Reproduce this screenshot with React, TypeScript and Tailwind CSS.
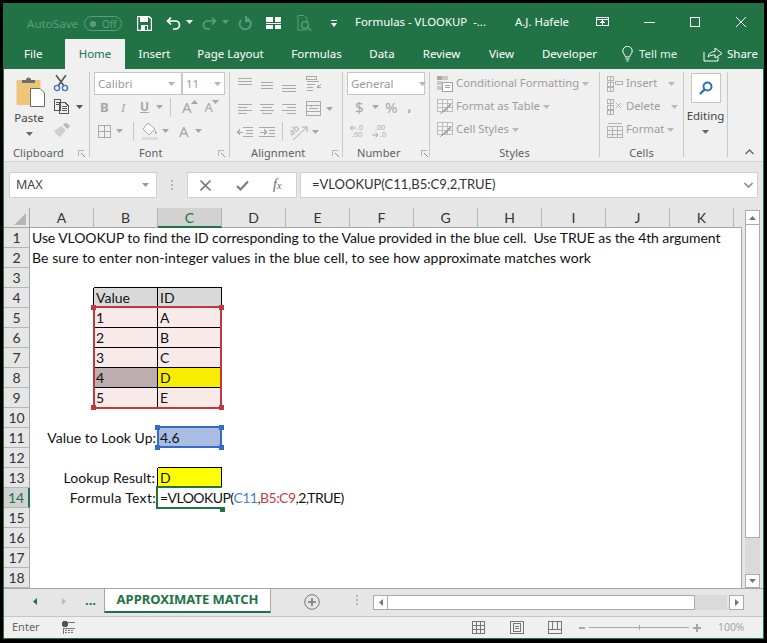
import React from "react";

const G = "#a9a9a9";

function Caret({ c = "#a6a6a6", className = "" }: { c?: string; className?: string }) {
  return (
    <svg width="7" height="4" viewBox="0 0 7 4" className={`shrink-0 ${className}`}>
      <path d="M0 0H7L3.5 4Z" fill={c} />
    </svg>
  );
}

function Lines({ w = 15, h = 14, d, c = G }: { w?: number; h?: number; d: string; c?: string }) {
  return (
    <svg width={w} height={h} viewBox={`0 0 ${w} ${h}`} className="shrink-0" shapeRendering="crispEdges">
      <path d={d} stroke={c} fill="none" strokeWidth="1" />
    </svg>
  );
}

function TitleBar() {
  const dim = "#5f9c7c";
  return (
    <div className="flex items-center h-[35px] text-white shrink-0 pt-[1px]">
      <span className="ml-[23px] w-[57px] mt-[3px] text-[11.6px] text-[#5f9c7c]">AutoSave</span>
      <span className="w-[38px] h-[15px] mt-[3px] rounded-full border border-[#5f9c7c] flex items-center pl-[5px] gap-[6px]">
        <span className="w-[6px] h-[6px] rounded-full bg-[#5f9c7c]" />
        <span className="text-[10px] leading-none text-[#5f9c7c]">Off</span>
      </span>
      <svg width="15" height="15" viewBox="0 0 15 15" className="ml-[15px] shrink-0 mt-[2px]">
        <path d="M0.5 0.5H12L14.5 3V14.5H0.5Z" fill="none" stroke="#fff" strokeWidth="1.4" />
        <rect x="3" y="1" width="8" height="5" fill="#fff" />
        <rect x="4" y="9" width="7" height="5" fill="#fff" />
        <rect x="8" y="10" width="2" height="4" fill="#217346" />
      </svg>
      <svg width="15" height="15" viewBox="0 0 15 15" className="ml-[14px] shrink-0 mt-[2px]">
        <path d="M5 1.5L1.5 5L5 8.5M2 5H9.5A3.6 3.6 0 0 1 9.5 13H7" fill="none" stroke="#fff" strokeWidth="1.7" />
      </svg>
      <Caret c="#fff" className="ml-[5px]" />
      <svg width="15" height="15" viewBox="0 0 15 15" className="ml-[9px] shrink-0 mt-[2px]">
        <path d="M10 1.5L13.5 5L10 8.5M13 5H5.5A3.6 3.6 0 0 0 5.5 13H8" fill="none" stroke={dim} strokeWidth="1.7" />
      </svg>
      <Caret c={dim} className="ml-[5px]" />
      <svg width="14" height="15" viewBox="0 0 14 15" className="ml-[9px] shrink-0 mt-[2px]">
        <path d="M8 2.2A5.6 5.6 0 1 1 3 4M8 0V5H12" fill="none" stroke={dim} strokeWidth="1.8" />
      </svg>
      <svg width="15" height="12" viewBox="0 0 15 12" className="ml-[14px] shrink-0 mt-[1px]" shapeRendering="crispEdges">
        <path d="M0 0H6.5V4.5H0ZM8.5 0H15V4.5H8.5ZM0 5.5H15V6.5H0ZM0 7.5H6.5V12H0ZM8.5 7.5H15V12H8.5Z" fill="#fff" />
      </svg>
      <svg width="15" height="16" viewBox="0 0 15 16" className="ml-[16px] shrink-0 mt-[2px]">
        <path d="M1 0.5H7L10 3.5V7M1 0.5V15H10" fill="none" stroke={dim} />
        <circle cx="8" cy="10" r="3.4" fill="none" stroke={dim} strokeWidth="1.4" />
        <path d="M10.5 12.5L14 15.5" stroke={dim} strokeWidth="1.6" />
      </svg>
      <svg width="6" height="7" viewBox="0 0 6 7" className="ml-[19px] shrink-0 mt-[2px]">
        <path d="M0 0H6V1H0ZM0 3H6L3 7Z" fill="#fff" />
      </svg>
      <span className="ml-[18px] w-[151px] text-[11.4px] whitespace-pre">Formulas - VLOOKUP  -...</span>
      <span className="ml-[9px] w-[70px] text-[11.4px]">A.J. Hafele</span>
      <svg width="13" height="10" viewBox="0 0 13 10" className="ml-[11px] shrink-0" shapeRendering="crispEdges">
        <path d="M0.5 0.5H12.5V8.5H0.5ZM0.5 2.5H12.5M6.5 8V4M4.5 6L6.5 4L8.5 6" fill="none" stroke="#fff" />
      </svg>
      <span className="ml-[35px] w-[11px] h-px bg-white" />
      <span className="ml-[35px] w-[10px] h-[10px] border border-white" />
      <svg width="10" height="10" viewBox="0 0 10 10" className="ml-[36px] shrink-0">
        <path d="M0 0L10 10M10 0L0 10" stroke="#fff" />
      </svg>
    </div>
  );
}

function TabRow() {
  const tabs: [string, string][] = [
    ["Insert", "w-[59px]"],
    ["Page Layout", "w-[93px]"],
    ["Formulas", "w-[79px]"],
    ["Data", "w-[52px]"],
    ["Review", "w-[67px]"],
    ["View", "w-[53px]"],
    ["Developer", "w-[83px]"],
  ];
  return (
    <div className="flex items-stretch h-[30px] text-[11.5px] text-white shrink-0">
      <div className="w-[61px] pl-[20px] flex items-center">File</div>
      <div className="w-[60px] bg-[#f0f0f0] text-[#217346] flex items-center justify-center">Home</div>
      {tabs.map(([t, w]) => (
        <div key={t} className={`${w} flex items-center justify-center`}>
          {t}
        </div>
      ))}
      <div className="ml-[11px] flex items-center">
        <svg width="11" height="16" viewBox="0 0 11 16" className="shrink-0">
          <path d="M3.5 11C3 8.5 0.8 7.5 0.8 5A4.7 4.7 0 0 1 10.2 5C10.2 7.5 8 8.5 7.5 11ZM3.5 13H7.5M4.5 15H6.5" fill="none" stroke="#fff" />
        </svg>
        <span className="ml-[6px] w-[45px] text-[#e4efe9]">Tell me</span>
      </div>
      <div className="ml-[19px] flex items-center">
        <svg width="20" height="15" viewBox="0 0 20 15" className="shrink-0">
          <path d="M1 5V14H15V10M5 10C5.5 6.5 8.5 4.5 12 4.5V1L19 6.5L12 11V8C9 8 6.5 8.5 5 10Z" fill="none" stroke="#fff" />
        </svg>
        <span className="ml-[4px]">Share</span>
      </div>
    </div>
  );
}

function Launcher() {
  return (
    <svg width="7" height="7" viewBox="0 0 7 7" className="shrink-0" shapeRendering="crispEdges">
      <path d="M0.5 6V0.5H6" fill="none" stroke="#b5b5b5" />
      <path d="M3 3L7 7M7 4V7H4" fill="none" stroke="#8f8f8f" />
    </svg>
  );
}

function Group({
  w,
  label,
  launcher,
  labelClass = "justify-center",
  children,
}: {
  w: string;
  label: string;
  launcher?: string;
  labelClass?: string;
  children: React.ReactNode;
}) {
  return (
    <div className={`${w} h-[85px] shrink-0 border-r border-[#c9c9c9] flex flex-col`}>
      <div className="h-[73px] shrink-0 flex flex-col">{children}</div>
      <div className={`h-[16px] shrink-0 flex items-center text-[11px] text-[#5e5e5e] tracking-[0.1px] ${labelClass}`}>
        <span>{label}</span>
        {launcher && <span className={launcher}><Launcher /></span>}
      </div>
    </div>
  );
}

function Combo({ w, t, text = "#9a9a9a", arrow }: { w: string; t: string; text?: string; arrow: string }) {
  return (
    <div className={`${w} h-[23px] bg-white border border-[#c6c6c6] flex items-center pl-[3px] text-[11.5px] shrink-0`} style={{ color: text }}>
      <span>{t}</span>
      <Caret c="#b5b5b5" className={arrow} />
    </div>
  );
}

function Clipboard() {
  return (
    <Group w="w-[86px]" label="Clipboard" labelClass="pl-[9px]" launcher="ml-[14px]">
      <div className="flex h-full">
        <div className="w-[46px] flex flex-col items-center pl-[7px] pt-[5px]">
          <svg width="30" height="30" viewBox="0 0 30 30" className="shrink-0">
            <rect x="0.5" y="3" width="24" height="25" rx="1" fill="#eec579" />
            <path d="M6 6V3H10A2.5 2.5 0 0 1 15 3H19V6Z" fill="#6e6e6e" />
            <path d="M14.5 11.5H24L28.5 16V29.5H14.5Z" fill="#fff" stroke="#6b6b6b" />
          </svg>
          <span className="text-[11.5px] text-[#444] leading-[16px] mt-[3px] -ml-[3px]">Paste</span>
          <Caret c="#666" className="mt-[6px] -ml-[3px]" />
        </div>
        <div className="flex flex-col pl-[4px] pt-[2px]">
          <svg width="16" height="17" viewBox="0 0 16 17" className="shrink-0 ml-[-1px] mt-[1px]">
            <path d="M3 0L11 11M13 0L5 11" stroke="#555" strokeWidth="1.6" />
            <circle cx="4" cy="13" r="2.6" fill="none" stroke="#3e78b5" strokeWidth="1.4" />
            <circle cx="12" cy="13" r="2.6" fill="none" stroke="#3e78b5" strokeWidth="1.4" />
          </svg>
          <div className="flex items-center mt-[7px]">
            <Lines w={16} h={15} c="#555" d="M0.5 0.5H6.5V11.5H0.5ZM5.5 3.5H11L14.5 7V14.5H5.5ZM7.5 7.5H12.5M7.5 9.5H12.5M7.5 11.5H12.5M2 3.5H5M2 5.5H5" />
            <Caret c="#555" className="ml-[6px]" />
          </div>
          <svg width="17" height="16" viewBox="0 0 17 16" className="shrink-0 mt-[8px]">
            <path d="M0 9L7 4L12 8L6 15C4 14 2 12 0 9Z" fill="#cfcfcf" />
            <path d="M9 3L12 0.5L16 4L13.5 7Z" fill="#b8b8b8" />
          </svg>
        </div>
      </div>
    </Group>
  );
}

function Font() {
  return (
    <Group w="w-[140px]" label="Font" launcher="ml-[55px]" labelClass="pl-[49px]">
      <div className="flex pl-[4px]">
        <Combo w="w-[88px]" t="Calibri" arrow="ml-[36px]" />
        <Combo w="w-[43px]" t="11" text="#a98fa8" arrow="ml-[15px] -mr-[4px]" />
      </div>
      <div className="flex items-center h-[24px] pl-[10px] text-[#a6a6a6]">
        <span className="w-[8px] text-[13px] font-bold leading-none">B</span>
        <span className="ml-[13px] w-[8px] text-[13px] italic leading-none font-['Liberation_Serif']">I</span>
        <span className="ml-[11px] w-[9px] text-[12px] font-bold underline leading-none">U</span>
        <Caret className="ml-[7px]" />
        <span className="ml-[7px] w-px h-[19px] bg-[#c9c9c9]" />
        <span className="ml-[11px] text-[15px] leading-none">A</span>
        <Caret className="-mt-[10px] rotate-180 -ml-[1px]" />
        <span className="ml-[7px] text-[13px] leading-none">A</span>
        <Caret className="-mt-[10px] -ml-[1px]" />
      </div>
      <div className="flex items-center h-[24px] pl-[8px]">
        <Lines w={13} h={13} d="M0.5 0.5H12.5V12.5H0.5ZM6.5 0.5V12.5M0.5 6.5H12.5" />
        <Caret className="ml-[5px]" />
        <span className="ml-[10px] w-px h-[19px] bg-[#c9c9c9]" />
        <svg width="16" height="18" viewBox="0 0 16 18" className="ml-[8px] shrink-0">
          <path d="M6 1L13 7L7 13L1 7Z" fill="#fff" stroke="#a9a9a9" />
          <path d="M13 8C15 10 15.5 12 14 12C13 12 12.5 10 13 8Z" fill="#a9a9a9" />
          <rect x="0" y="15" width="16" height="3" fill="#dcdcdc" />
        </svg>
        <Caret className="ml-[4px]" />
        <span className="ml-[10px] text-[15px] text-[#a6a6a6] leading-none">A</span>
        <Caret className="ml-[6px]" />
      </div>
    </Group>
  );
}

function Alignment() {
  const left = "M0 1.5H14M0 4.5H9M0 7.5H14M0 10.5H9";
  return (
    <Group w="w-[113px]" label="Alignment" labelClass="pl-[21px]" launcher="ml-[27px]">
      <div className="flex items-center h-[25px] pl-[8px]">
        <div className="-mt-[6px]"><Lines d="M0 1.5H14M0 4.5H14M0 7.5H14" h={9} /></div>
        <div className="ml-[7px] mt-[1px]"><Lines d="M1 1.5H13M1 4.5H13M1 7.5H13" h={9} /></div>
        <div className="ml-[7px] mt-[8px]"><Lines d="M0 1.5H14M0 4.5H14M0 7.5H14" h={9} /></div>
        <div className="ml-[9px] -mt-[2px]"><Lines w={16} h={15} d="M0.5 0.5H10.5V3.5H0.5ZM0.5 5.5H13M0.5 8.5H9M0.5 11.5H7M0.5 14.5H7M11 11.5L15.5 7.5M11 11.5H15" /></div>
      </div>
      <div className="flex items-center h-[23px] pl-[8px]">
        <Lines d={left} h={12} />
        <div className="ml-[7px]"><Lines d="M0 1.5H14M2 4.5H12M0 7.5H14M2 10.5H12" h={12} /></div>
        <div className="ml-[7px]"><Lines d="M0 1.5H14M5 4.5H14M0 7.5H14M5 10.5H14" h={12} /></div>
        <div className="ml-[9px]"><Lines w={15} h={15} d="M0.5 0.5H14.5V14.5H0.5ZM0.5 4.5H14.5M0.5 10.5H14.5M3 7.5H12M5 5.5V4.5M10 10.5V9.5" /></div>
        <Caret className="ml-[5px]" />
      </div>
      <div className="flex items-center h-[23px] pl-[7px]">
        <Lines w={16} h={12} d="M6 1.5H16M9 4.5H16M9 7.5H16M6 10.5H16M0 6H6M3 3.5L0.5 6L3 8.5" />
        <div className="ml-[6px]"><Lines w={16} h={12} d="M0 1.5H16M0 10.5H16M10 4.5H16M10 7.5H16M1 6H7M5 3.5L7.5 6L5 8.5" /></div>
        <span className="ml-[7px] w-px h-[19px] bg-[#c9c9c9]" />
        <svg width="18" height="18" viewBox="0 0 18 18" className="ml-[7px] shrink-0">
          <text x="0" y="10" fontSize="9" fill="#a9a9a9" transform="rotate(-40 5 9)" fontFamily="Noto Sans">ab</text>
          <path d="M3 17L17 4M17 4H12M17 4V9" fill="none" stroke="#a9a9a9" />
        </svg>
        <Caret className="ml-[4px]" />
      </div>
    </Group>
  );
}

function NumberGroup() {
  return (
    <Group w="w-[87px]" label="Number" labelClass="pl-[14px]" launcher="ml-[20px]">
      <div className="pl-[4px]">
        <Combo w="w-[78px]" t="General" arrow="ml-[26px]" />
      </div>
      <div className="flex items-center h-[24px] pl-[12px] text-[#a6a6a6]">
        <span className="w-[10px] text-[15px] leading-none">$</span>
        <Caret className="ml-[7px]" />
        <span className="ml-[6px] text-[15px] leading-none">%</span>
        <span className="ml-[10px] text-[14px] font-bold leading-none -mt-[2px]">,</span>
      </div>
      <div className="flex items-center h-[24px] pl-[7px]">
        <svg width="16" height="14" viewBox="0 0 16 14" className="shrink-0">
          <path d="M0.5 4H6M3 1.5L0.5 4L3 6.5" fill="none" stroke="#a9a9a9" />
          <text x="7" y="6" fontSize="7" fill="#a9a9a9" fontFamily="Noto Sans">.0</text>
          <text x="2" y="13" fontSize="7" fill="#a9a9a9" fontFamily="Noto Sans">.00</text>
        </svg>
        <svg width="16" height="14" viewBox="0 0 16 14" className="ml-[6px] shrink-0">
          <text x="3" y="6" fontSize="7" fill="#a9a9a9" fontFamily="Noto Sans">.00</text>
          <path d="M0 11H6M3.5 8.5L6 11L3.5 13.5" fill="none" stroke="#a9a9a9" />
          <text x="8" y="13" fontSize="7" fill="#a9a9a9" fontFamily="Noto Sans">.0</text>
        </svg>
      </div>
    </Group>
  );
}

function ListRow({ icon, text, arrow = "ml-[4px]", pad = "pl-[7px]" }: { icon: React.ReactNode; text: string; arrow?: string; pad?: string }) {
  return (
    <div className={`flex items-center h-[23px] ${pad} text-[11.3px] text-[#9d9d9d] whitespace-nowrap`}>
      {icon}
      <span className="ml-[3px]">{text}</span>
      <Caret c="#b9b9b9" className={arrow} />
    </div>
  );
}

function Styles() {
  const table = (
    <svg width="16" height="16" viewBox="0 0 16 16" className="shrink-0" shapeRendering="crispEdges">
      <path d="M0.5 0.5H15.5V12.5H0.5ZM0.5 4.5H15.5M0.5 8.5H15.5M5.5 0.5V12.5M10.5 0.5V12.5" fill="#f4f4f4" stroke="#bdbdbd" />
      <path d="M3 15L8 9L13 4L14 6L9 12Z" fill="#a9a9a9" />
    </svg>
  );
  return (
    <Group w="w-[170px]" label="Styles">
      <ListRow
        text="Conditional Formatting"
        arrow="ml-[3px]"
        icon={
          <svg width="16" height="16" viewBox="0 0 16 16" className="shrink-0" shapeRendering="crispEdges">
            <rect x="0" y="0" width="5" height="4" fill="#b3a5a5" />
            <rect x="5" y="0" width="6" height="4" fill="#c8c8c8" />
            <rect x="0" y="5" width="5" height="4" fill="#c8c8c8" />
            <rect x="0" y="10" width="5" height="4" fill="#c8c8c8" />
            <path d="M5.5 6.5H15.5V15.5H5.5ZM8 9.5H13M8 11.5H13" fill="#fff" stroke="#a0a0a0" />
          </svg>
        }
      />
      <ListRow text="Format as Table" arrow="ml-[3px]" icon={table} />
      <ListRow text="Cell Styles" arrow="ml-[3px]" icon={table} />
    </Group>
  );
}

function Cells() {
  const a = (d: string) => <Lines w={16} h={16} c="#b3b3b3" d={d} />;
  return (
    <Group w="w-[84px]" label="Cells">
      <ListRow text="Insert" arrow="ml-[11px]" icon={a("M0.5 0.5H6.5V4.5H0.5ZM0.5 6.5H6.5V10.5H0.5ZM0.5 11.5H6.5V15.5H0.5ZM3.5 0.5V15.5M8.5 5.5H15.5V8.5H8.5Z")} />
      <ListRow text="Delete" arrow="ml-[11px]" icon={a("M0.5 0.5H6.5V4.5H0.5ZM0.5 6.5H6.5V10.5H0.5ZM0.5 11.5H6.5V15.5H0.5ZM3.5 0.5V15.5M9 4L14 9M14 4L9 9")} />
      <ListRow text="Format" arrow="ml-[3px]" icon={a("M0.5 4.5H15.5V15.5H0.5ZM0.5 8.5H15.5M0.5 12.5H15.5M5.5 4.5V15.5M10.5 4.5V15.5M1 1.5H15")} />
    </Group>
  );
}

function Editing() {
  return (
    <div className="w-[44px] h-[85px] shrink-0 border-r border-[#c9c9c9] flex flex-col items-center text-[11.5px] text-[#444]">
      <div className="w-[30px] h-[30px] mt-[1px] bg-white border border-[#c6c6c6] flex items-center justify-center">
        <svg width="14" height="14" viewBox="0 0 14 14" className="shrink-0">
          <circle cx="8.5" cy="5.5" r="4" fill="none" stroke="#2f6fb0" strokeWidth="2" />
          <path d="M5.5 8.5L1 13" stroke="#2f6fb0" strokeWidth="2.4" />
        </svg>
      </div>
      <span className="leading-[16px] mt-[5px]">Editing</span>
      <Caret c="#666" className="mt-[6px]" />
    </div>
  );
}

function Ribbon() {
  return (
    <div className="h-[93px] bg-[#f0f0f0] border-b border-[#d2d2d2] flex pt-[3px] shrink-0">
      <Clipboard />
      <Font />
      <Alignment />
      <NumberGroup />
      <Styles />
      <Cells />
      <Editing />
      <div className="self-end mb-[6px] ml-[17px]">
        <svg width="9" height="6" viewBox="0 0 9 6" className="shrink-0">
          <path d="M0.5 5L4.5 1L8.5 5" fill="none" stroke="#666" strokeWidth="1.4" />
        </svg>
      </div>
    </div>
  );
}

function FormulaBar() {
  return (
    <div className="h-[46px] flex items-center shrink-0 pl-[5px] text-[13px] text-[#444] bg-[#e6e6e6]">
      <div className="w-[148px] h-[26px] bg-white border border-[#d0d0d0] flex items-center pl-[6px] text-[12.5px]">
        <span>MAX</span>
        <Caret c="#999" className="ml-[99px]" />
      </div>
      <div className="w-[30px] flex flex-col items-center gap-[2px]">
        <span className="w-[2px] h-[2px] bg-[#b5b5b5]" />
        <span className="w-[2px] h-[2px] bg-[#b5b5b5]" />
        <span className="w-[2px] h-[2px] bg-[#b5b5b5]" />
      </div>
      <div className="w-[110px] h-[26px] bg-white border border-[#d0d0d0] flex items-center pl-[12px]">
        <svg width="11" height="11" viewBox="0 0 11 11" className="shrink-0">
          <path d="M0.5 0.5L10.5 10.5M10.5 0.5L0.5 10.5" stroke="#7d7d7d" strokeWidth="1.6" />
        </svg>
        <svg width="13" height="11" viewBox="0 0 13 11" className="ml-[25px] shrink-0">
          <path d="M1 6L4.5 9.5L12 1.5" fill="none" stroke="#7d7d7d" strokeWidth="2.2" />
        </svg>
        <span className="ml-[24px] italic text-[14px] text-[#666] font-['Liberation_Serif'] leading-none">
          f<span className="text-[10px]">x</span>
        </span>
      </div>
      <div className="ml-[3px] w-[458px] h-[26px] bg-white border border-[#d0d0d0] flex items-center pl-[11px] font-['Lato'] text-[#333] text-[13px]">
        <span className="w-[182px] whitespace-nowrap">=VLOOKUP(C11,B5:C9,2,TRUE)</span>
        <svg width="9" height="6" viewBox="0 0 9 6" className="ml-[250px] shrink-0">
          <path d="M0.5 1L4.5 5L8.5 1" fill="none" stroke="#888" strokeWidth="1.6" />
        </svg>
      </div>
    </div>
  );
}

type CellDef = { t?: React.ReactNode; cls?: string };

const cols = ["A", "B", "C", "D", "E", "F", "G", "H", "I", "J", "K"];
const rows = Array.from({ length: 18 }, (_, i) => i + 1);

const blackR = "border-r border-r-black";
const blackB = "border-b border-b-black";
const cells: Record<string, CellDef> = {
  A1: { t: "Use VLOOKUP to find the ID corresponding to the Value provided in the blue cell.  Use TRUE as the 4th argument", cls: "tracking-[-0.08px]" },
  A2: { t: "Be sure to enter non-integer values in the blue cell, to see how approximate matches work", cls: "tracking-[0.09px]" },
  B3: { cls: blackB },
  C3: { cls: blackB },
  A4: { cls: blackR },
  B4: { t: "Value", cls: `bg-[#d9d9d9] ${blackR} ${blackB}` },
  C4: { t: "ID", cls: `bg-[#d9d9d9] ${blackR} ${blackB}` },
  A5: { cls: blackR },
  B5: { t: "1", cls: `bg-[#f9eaea] ${blackR} ${blackB}` },
  C5: { t: "A", cls: `bg-[#f9eaea] ${blackR} ${blackB}` },
  A6: { cls: blackR },
  B6: { t: "2", cls: `bg-[#f9eaea] ${blackR} ${blackB}` },
  C6: { t: "B", cls: `bg-[#f9eaea] ${blackR} ${blackB}` },
  A7: { cls: blackR },
  B7: { t: "3", cls: `bg-[#f9eaea] ${blackR} ${blackB}` },
  C7: { t: "C", cls: `bg-[#f9eaea] ${blackR} ${blackB}` },
  A8: { cls: blackR },
  B8: { t: "4", cls: `bg-[#bcaeae] ${blackR} ${blackB}` },
  C8: { t: "D", cls: `bg-[#f8ec00] ${blackR} ${blackB}` },
  A9: { cls: blackR },
  B9: { t: "5", cls: `bg-[#f9eaea] ${blackR} ${blackB}` },
  C9: { t: "E", cls: `bg-[#f9eaea] ${blackR} ${blackB}` },
  B11: { t: "Value to Look Up:", cls: "justify-end" },
  C11: { t: "4.6", cls: "bg-[#a9bde3]" },
  C12: { cls: blackB },
  B13: { t: "Lookup Result:", cls: `justify-end tracking-[0.08px] ${blackR}` },
  C13: { t: "D", cls: `bg-[#ffff00] ${blackR} ${blackB}` },
  B14: { t: "Formula Text:", cls: "justify-end tracking-[0.3px]" },
  C14: {
    t: (
      <>
        =VLOOKUP(<span className="text-[#4a7fd0]">C11</span>,<span className="text-[#cc3a4a]">B5:C9</span>,2,TRUE)
      </>
    ),
    cls: "tracking-[-0.55px]",
  },
};

function Handle({ c, pos }: { c: string; pos: string }) {
  return <span className={`absolute w-[5px] h-[5px] ${c} ${pos}`} />;
}

function Sheet() {
  return (
    <div className="relative w-[738px] h-[380px] bg-white grid grid-cols-[26px_repeat(11,64px)_8px] grid-rows-[repeat(19,20px)] overflow-hidden shrink-0 font-['Lato'] text-[14px]">
      <div className="bg-[#e6e6e6] border-r border-b border-[#a6a6a6] flex items-end justify-end pr-[3px] pb-[2px]">
        <svg width="12" height="12" viewBox="0 0 12 12" className="shrink-0">
          <path d="M12 0V12H0Z" fill="#b5b5b5" />
        </svg>
      </div>
      {cols.map((c) =>
        c === "C" ? (
          <div key={c} className="bg-[#d2d2d2] border-b-2 border-[#217346] border-r border-r-[#b0b0b0] flex items-center justify-center text-[#217346]">
            {c}
          </div>
        ) : (
          <div key={c} className="bg-[#e6e6e6] border-b border-[#a6a6a6] border-r border-r-[#b5b5b5] flex items-center justify-center text-[#333]">
            {c}
          </div>
        )
      )}
      <div className="bg-[#e6e6e6] border-b border-[#a6a6a6]" />
      {rows.map((r) => (
        <React.Fragment key={r}>
          {r === 14 ? (
            <div className="bg-[#d2d2d2] border-r-2 border-r-[#217346] border-b border-b-[#b5b5b5] flex items-center justify-center text-[#217346]">
              {r}
            </div>
          ) : (
            <div className="bg-[#e6e6e6] border-r border-r-[#a6a6a6] border-b border-b-[#b5b5b5] flex items-center justify-center text-[#333]">
              {r}
            </div>
          )}
          {cols.map((c) => {
            const cell = cells[`${c}${r}`];
            return (
              <div key={c} className={`flex items-center whitespace-pre px-[2px] text-[#111] leading-none ${cell?.cls ?? ""}`}>
                {cell?.t}
              </div>
            );
          })}
          <div className="border-r border-[#a6a6a6]" />
        </React.Fragment>
      ))}
      <div className="absolute left-[89px] top-[98px] w-[129px] h-[103px] border-2 border-[#c0393f]" />
      <Handle c="bg-[#c0393f]" pos="left-[87px] top-[97px]" />
      <Handle c="bg-[#c0393f]" pos="left-[215px] top-[97px]" />
      <Handle c="bg-[#c0393f]" pos="left-[87px] top-[197px]" />
      <Handle c="bg-[#c0393f]" pos="left-[215px] top-[197px]" />
      <div className="absolute left-[153px] top-[218px] w-[65px] h-[22px] border-2 border-[#356bc4]" />
      <Handle c="bg-[#356bc4]" pos="left-[151px] top-[217px]" />
      <Handle c="bg-[#356bc4]" pos="left-[215px] top-[217px]" />
      <Handle c="bg-[#356bc4]" pos="left-[151px] top-[237px]" />
      <Handle c="bg-[#356bc4]" pos="left-[215px] top-[237px]" />
      <div className="absolute left-[152px] top-[278px] w-[66px] h-[23px] border-l-2 border-t-2 border-b-2 border-[#217346]" />
      <Handle c="bg-[#217346]" pos="left-[216px] top-[299px]" />
    </div>
  );
}

function VScroll() {
  return (
    <div className="w-[15px] h-[380px] ml-[3px] flex flex-col shrink-0 pt-[2px] bg-[#e6e6e6]">
      <div className="h-[15px] shrink-0 bg-white border border-[#ababab] flex items-center justify-center">
        <Caret c="#777" className="rotate-180" />
      </div>
      <div className="h-[313px] shrink-0 bg-white border-x border-b border-[#ababab]" />
      <div className="h-[36px] shrink-0 bg-[#dadada]" />
      <div className="h-[14px] shrink-0 bg-white border border-[#ababab] flex items-center justify-center">
        <Caret c="#777" />
      </div>
    </div>
  );
}

function TabBar() {
  return (
    <div className="h-[28px] border-t border-[#a6a6a6] bg-[#e6e6e6] flex shrink-0 text-[#217346]">
      <div className="w-[100px] h-[22px] flex items-center pl-[29px] pt-[2px]">
        <svg width="4" height="7" viewBox="0 0 4 7" className="shrink-0"><path d="M4 0V7L0 3.5Z" fill="#217346" /></svg>
        <svg width="4" height="7" viewBox="0 0 4 7" className="ml-[25px] shrink-0"><path d="M0 0V7L4 3.5Z" fill="#bdbdbd" /></svg>
        <span className="ml-[19px] text-[13px] font-bold leading-none -mt-[2px]">...</span>
      </div>
      <div className="-mt-px w-[167px] h-[25px] bg-white border-x border-t border-[#a6a6a6] border-b-2 border-b-[#217346] flex items-center justify-center text-[13px] font-bold whitespace-nowrap">
        APPROXIMATE MATCH
      </div>
      <div className="ml-[33px] mt-[5px]">
        <svg width="16" height="16" viewBox="0 0 16 16" className="shrink-0">
          <circle cx="8" cy="8" r="7.3" fill="none" stroke="#777" />
          <path d="M8 4V12M4 8H12" stroke="#777" strokeWidth="1.6" />
        </svg>
      </div>
      <div className="ml-[36px] mt-[6px] flex flex-col gap-[2px]">
        <span className="w-[2px] h-[2px] bg-[#b5b5b5]" />
        <span className="w-[2px] h-[2px] bg-[#b5b5b5]" />
        <span className="w-[2px] h-[2px] bg-[#b5b5b5]" />
      </div>
      <div className="ml-[15px] mt-[6px] h-[15px] flex">
        <div className="w-[15px] bg-white border border-[#ababab] flex items-center justify-center">
          <svg width="4" height="7" viewBox="0 0 4 7" className="shrink-0"><path d="M4 0V7L0 3.5Z" fill="#777" /></svg>
        </div>
        <div className="w-[307px] bg-white border-y border-r border-[#ababab]" />
        <div className="w-[32px] bg-[#dadada]" />
        <div className="ml-[2px] w-[15px] bg-white border border-[#ababab] flex items-center justify-center">
          <svg width="4" height="7" viewBox="0 0 4 7" className="shrink-0"><path d="M0 0V7L4 3.5Z" fill="#777" /></svg>
        </div>
      </div>
    </div>
  );
}

function StatusBar() {
  return (
    <div className="h-[22px] border-t border-[#c6c6c6] bg-[#f0f0f0] flex items-center text-[11px] text-[#666] shrink-0">
      <span className="ml-[8px] w-[50px]">Enter</span>
      <svg width="13" height="13" viewBox="0 0 13 13" className="shrink-0" shapeRendering="crispEdges">
        <circle cx="3" cy="3" r="3" fill="#555" />
        <path d="M6 1H13V13H1V7H13" fill="none" stroke="#777" />
        <path d="M3 9H5M6 9H8M9 9H11M3 11H5M6 11H8M9 11H11" stroke="#777" />
      </svg>
      <div className="ml-[397px]">
        <Lines w={13} h={13} c="#777" d="M0.5 0.5H12.5V12.5H0.5ZM0.5 4.5H12.5M0.5 8.5H12.5M4.5 0.5V12.5M8.5 0.5V12.5" />
      </div>
      <div className="ml-[25px]">
        <Lines w={14} h={13} c="#777" d="M0.5 0.5H13.5V12.5H0.5ZM3.5 2.5H10.5V10.5H3.5ZM5 5H9M5 7H9" />
      </div>
      <div className="ml-[24px]">
        <Lines w={14} h={13} c="#777" d="M0.5 0.5H13.5V12.5H0.5ZM0.5 8.5H13.5M4.5 0.5V8.5M9.5 0.5V8.5" />
      </div>
      <span className="ml-[17px] w-[6px] h-[2px] bg-[#a6a6a6]" />
      <div className="ml-[4px] w-[100px] h-px bg-[#a6a6a6] flex justify-center items-center">
        <span className="w-px h-[5px] bg-[#a6a6a6]" />
      </div>
      <svg width="8" height="8" viewBox="0 0 8 8" className="ml-[4px] shrink-0">
        <path d="M4 0V8M0 4H8" stroke="#a6a6a6" strokeWidth="2" />
      </svg>
      <span className="ml-[17px] text-[10.4px] text-[#a6a6a6]">100%</span>
    </div>
  );
}

export default function App() {
  return (
    <div className="w-[767px] h-[643px] bg-black pt-[3px] pl-[3px] font-['Noto_Sans',sans-serif] overflow-hidden">
      <div className="w-[761px] h-[636px] border border-[#217346] flex flex-col bg-[#217346] overflow-hidden">
        <TitleBar />
        <TabRow />
        <Ribbon />
        <FormulaBar />
        <div className="flex bg-[#e6e6e6] h-[380px] shrink-0">
          <Sheet />
          <VScroll />
        </div>
        <TabBar />
        <StatusBar />
      </div>
    </div>
  );
}
